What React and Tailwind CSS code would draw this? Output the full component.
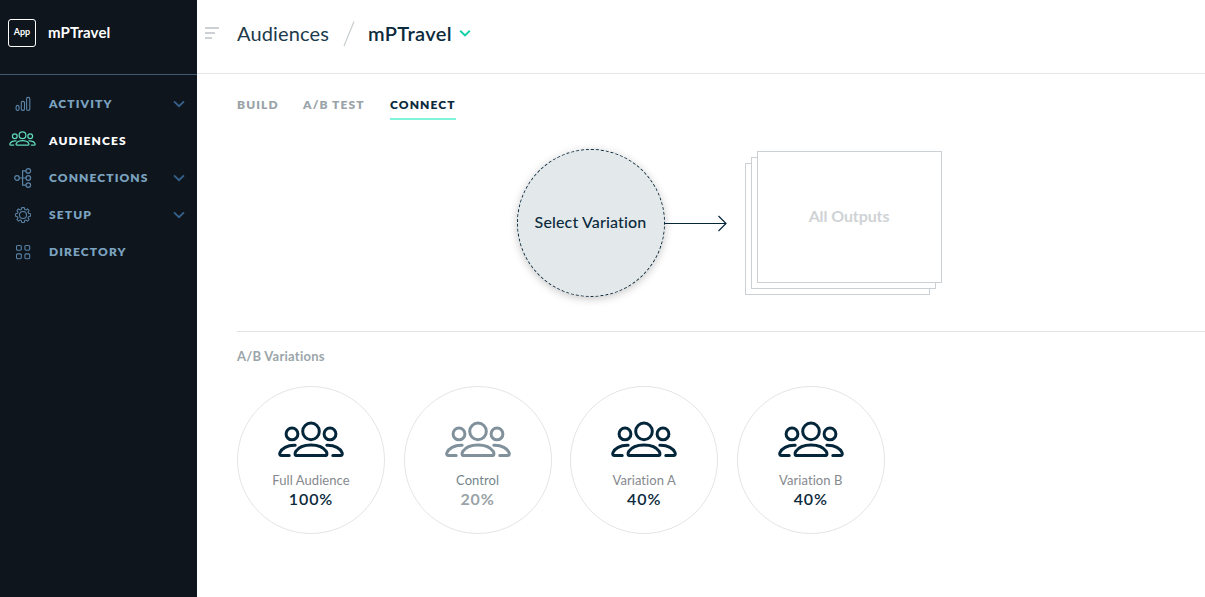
function People({ className, stroke = 3 }) {
  return (
    <svg viewBox="0 0 66 37" className={className} fill="none" stroke="currentColor" strokeWidth={stroke} strokeLinecap="round" strokeLinejoin="round">
      <circle cx="33" cy="10.4" r="8.3" />
      <circle cx="14" cy="12.9" r="5.9" />
      <circle cx="52" cy="12.9" r="5.9" />
      <path d="M19 34.6H47C49.4 34.6 49.3 32.2 48.2 30.4C45.6 26.4 40 24 33 24S20.4 26.4 17.8 30.4C16.7 32.2 16.6 34.6 19 34.6Z" />
      <path d="M17.2 24.3C9 24 3.6 27.6 2 31.5C1.3 33.3 2 34.6 3.6 34.6H11.2" />
      <path d="M48.8 24.3C57 24 62.4 27.6 64 31.5C64.7 33.3 64 34.6 62.4 34.6H54.8" />
    </svg>
  );
}

function Bars() {
  return (
    <svg viewBox="0 0 16 16" className="h-4 w-4" fill="none" stroke="currentColor" strokeWidth="1.1">
      <rect x="1.1" y="9.4" width="3" height="5" rx="1.5" />
      <rect x="6.3" y="5.4" width="3.2" height="9" rx="1.3" />
      <rect x="11.6" y="1.4" width="3.2" height="13" rx="1.5" />
    </svg>
  );
}

function Nodes() {
  return (
    <svg viewBox="0 0 18 20" className="h-5 w-[18px]" fill="none" stroke="currentColor" strokeWidth="1.2">
      <circle cx="3" cy="10" r="2.3" />
      <circle cx="14.3" cy="2.9" r="2.3" />
      <circle cx="14.3" cy="10" r="2.3" />
      <circle cx="14.3" cy="17.1" r="2.3" />
      <path d="M5.3 10H12M12 2.9H8.6V17.1H12" />
    </svg>
  );
}

function Gear() {
  return (
    <svg viewBox="0 0 16 16" className="h-4 w-4" fill="none" stroke="currentColor" strokeWidth="1.05" strokeLinejoin="round">
      <circle cx="8" cy="8" r="3.5" />
      <path d="M6.7 .6H9.3L9.7 2.5L10.9 3L12.5 1.9L14.1 3.5L13 5.1L13.5 6.3L15.4 6.7V9.3L13.5 9.7L13 10.9L14.1 12.5L12.5 14.1L10.9 13L9.7 13.5L9.3 15.4H6.7L6.3 13.5L5.1 13L3.5 14.1L1.9 12.5L3 10.9L2.5 9.7L.6 9.3V6.7L2.5 6.3L3 5.1L1.9 3.5L3.5 1.9L5.1 3L6.3 2.5Z" />
    </svg>
  );
}

function Grid() {
  return (
    <svg viewBox="0 0 16 16" className="h-4 w-4" fill="none" stroke="currentColor" strokeWidth="1.1">
      <rect x="1.5" y="1.5" width="4.8" height="4.8" rx="1.2" />
      <rect x="9.9" y="1.5" width="4.8" height="4.8" rx="1.2" />
      <rect x="1.5" y="9.9" width="4.8" height="4.8" rx="1.2" />
      <rect x="9.9" y="9.9" width="4.8" height="4.8" rx="1.2" />
    </svg>
  );
}

function Chevron({ className }) {
  return (
    <svg viewBox="0 0 12 8" className={className} fill="none" stroke="currentColor" strokeWidth="1.8">
      <path d="M1 1.3L6 6.2L11 1.3" />
    </svg>
  );
}

const NAV = [
  { label: "ACTIVITY", icon: <Bars />, more: true },
  { label: "AUDIENCES", icon: <People className="h-[15px] w-[27px]" />, active: true },
  { label: "CONNECTIONS", icon: <Nodes />, more: true },
  { label: "SETUP", icon: <Gear />, more: true },
  { label: "DIRECTORY", icon: <Grid /> },
];

function Sidebar() {
  return (
    <aside className="flex w-[197px] shrink-0 flex-col bg-[#0e151c]">
      <div className="flex h-[75px] items-start border-b border-[#3f5a70] pl-2">
        <div className="mt-[19px] flex h-7 w-7 items-center justify-center rounded-[3px] border border-white pb-0.5 text-[9px] font-bold text-white">App</div>
        <div className="mt-[18px] ml-3 text-[15px] leading-7 font-bold tracking-[0.1px] text-white">mPTravel</div>
      </div>
      <nav className="flex flex-col pt-2.5">
        {NAV.map((n) => (
          <div key={n.label} className="flex h-[37px] items-center pr-3">
            <div className={`flex w-[46px] items-center justify-center ${n.active ? "pr-0.5 pb-1 text-[#5fd9b8]" : "text-[#5a83a8]"}`}>{n.icon}</div>
            <div className={`ml-[3px] flex-1 text-[12px] font-extrabold tracking-[1.1px] ${n.active ? "text-white" : "text-[#7ba3c0]"}`}>{n.label}</div>
            {n.more && <Chevron className="h-2 w-3 text-[#36618c]" />}
          </div>
        ))}
      </nav>
    </aside>
  );
}

const VARIATIONS = [
  { name: "Full Audience", pct: "100%" },
  { name: "Control", pct: "20%", muted: true },
  { name: "Variation A", pct: "40%" },
  { name: "Variation B", pct: "40%" },
];

export default function App() {
  return (
    <div className="flex h-[597px] w-[1205px] overflow-hidden bg-white font-['Lato','Open_Sans',sans-serif] text-[#0b2a3c]">
      <Sidebar />
      <main className="flex min-w-0 flex-1 flex-col">
        <header className="flex h-[74px] items-start border-b border-[#e4e6e8] pl-2">
          <div className="mt-[27px] flex w-8 flex-col gap-[3px]">
            <div className="h-0.5 w-3.5 bg-[#cdd1d5]" />
            <div className="h-0.5 w-2.5 bg-[#cdd1d5]" />
            <div className="h-0.5 w-[7px] bg-[#cdd1d5]" />
          </div>
          <div className="mt-[19px] w-[92px] text-[20px] leading-7 tracking-[0.15px] whitespace-nowrap text-[#1c3a4b]">Audiences</div>
          <svg viewBox="0 0 12 26" className="mt-[21px] ml-[14px] h-[26px] w-3" fill="none" stroke="#c6cbcf" strokeWidth="1.1">
            <path d="M1 25L11 .5" />
          </svg>
          <div className="mt-[19px] ml-[13px] w-[84px] text-[20px] leading-7 font-semibold tracking-[0.35px] whitespace-nowrap">mPTravel</div>
          <svg viewBox="0 0 12 8" className="mt-[30px] ml-[7px] h-2 w-3" fill="none" stroke="#14cfa5" strokeWidth="1.9">
            <path d="M1.2 .8L6 5.4L10.8 .8" />
          </svg>
        </header>

        <div className="flex flex-col pl-10">
          <div className="flex h-[46px] items-end text-[12px] leading-[22px] font-extrabold tracking-[1.1px] text-[#9aa3a8]">
            <div className="h-[26px] w-[66px]">BUILD</div>
            <div className="h-[26px] w-[87px]">A/B TEST</div>
            <div className="h-[26px] w-[66px] border-b-2 border-[#80f5dc] text-[#0b2a3c]">CONNECT</div>
          </div>

          <section className="flex h-[212px] items-start border-b border-[#e1e4e6] pt-[29px] pl-[280px]">
            <div className="flex h-[148px] w-[148px] items-center justify-center rounded-full border border-dashed border-[#0b2a3c] bg-[#e3e8ea] pr-px pb-0.5 text-[16px] font-medium tracking-[0.15px] shadow-[0_2px_8px_rgba(0,0,0,0.22)]">
              Select Variation
            </div>
            <svg viewBox="0 0 62 18" className="mt-[66px] h-[18px] w-[62px]" fill="none" stroke="#06263a" strokeWidth="1.2">
              <path d="M0 8.5H61M53.5 1L61 8.5L53.5 16" />
            </svg>
            <div className="relative mt-0.5 ml-[18px] h-[144px] w-[197px]">
              <div className="absolute top-3 left-0 h-[132px] w-[185px] border border-[#cbd0d4] bg-white" />
              <div className="absolute top-1.5 left-1.5 h-[132px] w-[185px] border border-[#cbd0d4] bg-white" />
              <div className="absolute top-0 left-3 flex h-[132px] w-[185px] items-center justify-center border border-[#cbd0d4] bg-white pr-px pb-0.5 text-[16px] font-bold tracking-[-0.1px] text-[#cfd3d6]">
                All Outputs
              </div>
            </div>
          </section>

          <section className="pt-3.5">
            <div className="text-[13px] leading-5 font-bold tracking-[0.25px] text-[#9aa5aa]">A/B Variations</div>
            <div className="mt-5 flex gap-[18.6px]">
              {VARIATIONS.map((v) => (
                <div key={v.name} className="flex h-[148px] w-[148px] flex-col items-center rounded-full border border-[#e3e5e6] pt-[34px]">
                  <People className={`h-[37px] w-[66px] ${v.muted ? "text-[#80919c]" : "text-[#03263a]"}`} />
                  <div className={`mt-[14px] text-[13px] leading-4 tracking-[0.06px] ${v.muted ? "text-[#75858c]" : "text-[#86898e]"}`}>{v.name}</div>
                  <div className={`mt-px text-[16px] leading-5 tracking-[0.9px] ${v.muted ? "font-bold text-[#9aa3a8]" : "font-semibold"}`}>{v.pct}</div>
                </div>
              ))}
            </div>
          </section>
        </div>
      </main>
    </div>
  );
}
